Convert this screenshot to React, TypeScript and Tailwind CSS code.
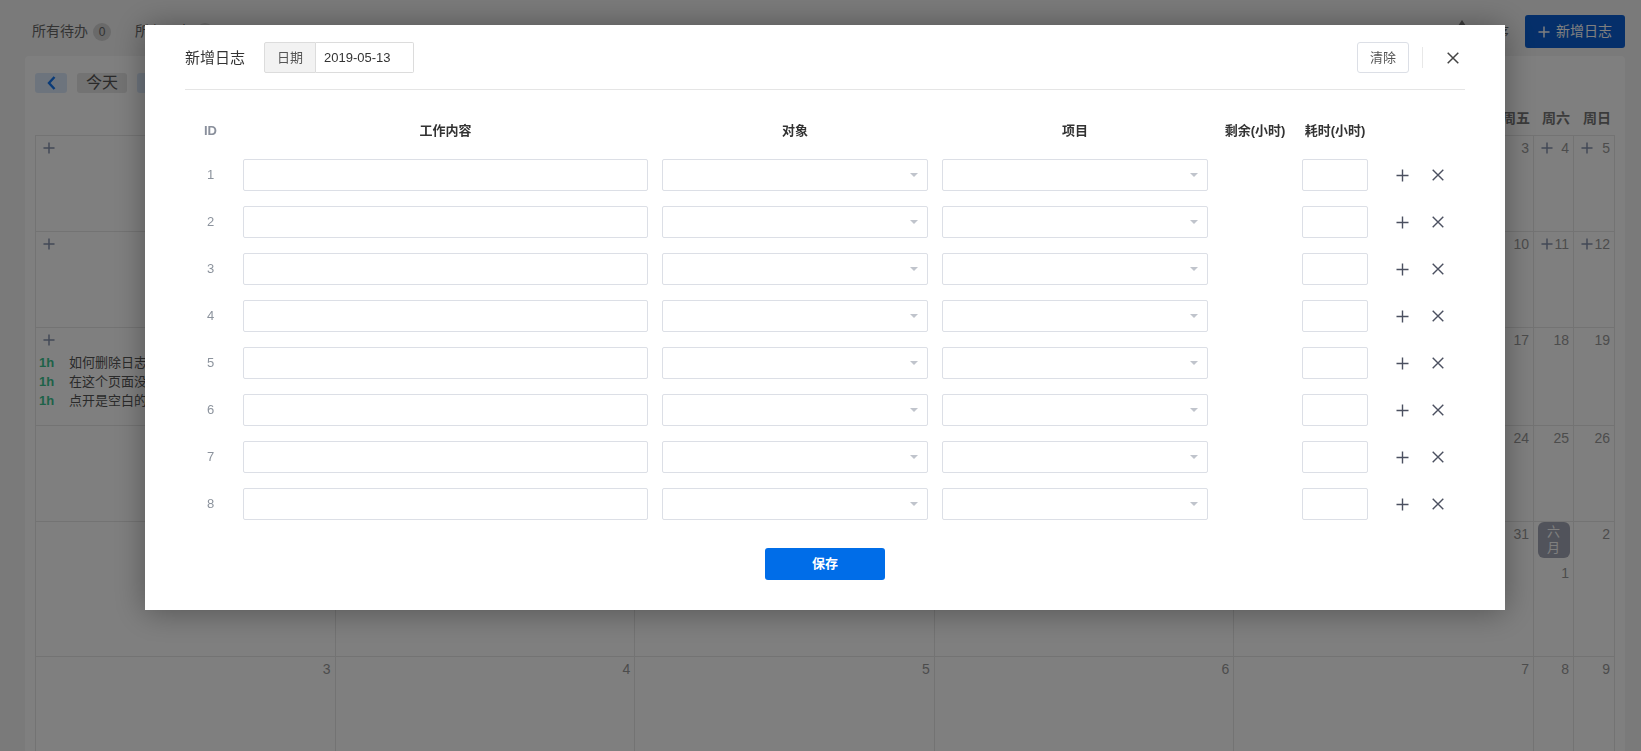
import React from 'react';

const weekNames = ['周一', '周二', '周三', '周四', '周五', '周六', '周日'];

type Cell = { day: number; plus?: boolean; entries?: string[]; month?: string };

const weeks: Cell[][] = [
  [29, 30, 1, 2, 3, 4, 5].map((d) => ({ day: d, plus: true })),
  [6, 7, 8, 9, 10, 11, 12].map((d) => ({ day: d, plus: true })),
  [
    { day: 13, plus: true, entries: ['如何删除日志？', '在这个页面没有找到删除按钮', '点开是空白的，无法编辑'] },
    { day: 14 },
    { day: 15 },
    { day: 16 },
    { day: 17 },
    { day: 18 },
    { day: 19 },
  ],
  [20, 21, 22, 23, 24, 25, 26].map((d) => ({ day: d })),
  [{ day: 27 }, { day: 28 }, { day: 29 }, { day: 30 }, { day: 31 }, { day: 1, month: '六月' }, { day: 2 }],
  [3, 4, 5, 6, 7, 8, 9].map((d) => ({ day: d })),
];

const PlusIcon = ({ size = 13, color = '#4b5060', stroke = 1.4 }: { size?: number; color?: string; stroke?: number }) => (
  <svg width={size} height={size} viewBox="0 0 13 13" fill="none">
    <path d="M6.5 0.5V12.5M0.5 6.5H12.5" stroke={color} strokeWidth={stroke} />
  </svg>
);

const CloseIcon = ({ size = 12, color = '#4b5060', stroke = 1.4 }: { size?: number; color?: string; stroke?: number }) => (
  <svg width={size} height={size} viewBox="0 0 12 12" fill="none">
    <path d="M0.7 0.7L11.3 11.3M11.3 0.7L0.7 11.3" stroke={color} strokeWidth={stroke} />
  </svg>
);

function CalCell({ cell }: { cell: Cell }) {
  // month change: badge on top of the day number
  if (cell.month) {
    return (
      <div className="flex flex-col items-center border-r border-b border-[#e6e6e6] bg-white">
        <div className="flex h-[36px] w-[32px] flex-col items-center justify-center rounded-[6px] bg-[#a3a7b6] text-[13px] leading-[16px] text-white">
          <span>{cell.month[0]}</span>
          <span>{cell.month[1]}</span>
        </div>
        <div className="mt-[5px] h-5 w-full pr-[4px] text-right text-[14px] leading-5 text-[#999]">{cell.day}</div>
        <div className="h-[73px]" />
      </div>
    );
  }
  return (
    <div className="flex min-h-[96px] flex-col border-r border-b border-[#e6e6e6] bg-white pb-[15px]">
      <div className="mt-[2px] flex h-5 items-center justify-between pl-[7px] pr-[4px]">
        {cell.plus ? <PlusIcon size={12} color="#8592ad" stroke={1.6} /> : <span />}
        <span className="text-[14px] leading-5 text-[#999]">{cell.day}</span>
      </div>
      {cell.entries && (
        <div className="mt-[3px] flex flex-col">
          {cell.entries.map((e) => (
            <div key={e} className="flex h-[19px] items-center whitespace-nowrap pl-[3px] text-[13px]">
              <span className="w-[30px] font-bold text-[#3cc592]">1h</span>
              <span className="text-[#555]">{e}</span>
            </div>
          ))}
        </div>
      )}
    </div>
  );
}

function SelectBox() {
  return (
    <div className="relative flex h-[32px] items-center justify-end rounded-[2px] border border-[#dcdfe6] bg-white pr-[9px]">
      <span className="h-0 w-0 border-x-[4px] border-t-[4px] border-x-transparent border-t-[#c0c4cc]" />
    </div>
  );
}

const cols = 'grid grid-cols-[51px_419px_280px_280px_80px_80px_90px]';

export default function App() {
  const rows = [1, 2, 3, 4, 5, 6, 7, 8];

  return (
    <div className="relative h-[751px] w-full overflow-hidden bg-[#f4f4f4] font-['Liberation_Sans','Noto_Sans_CJK_SC',sans-serif]">
      {/* page behind the dialog */}
      <div className="flex h-[56px] items-start pl-[32px] pr-[16px] pt-[15px]">
        <div className="flex h-[33px] items-center gap-[24px] text-[14px] text-[#666]">
          <div className="flex items-center gap-[5px]">
            <span>所有待办</span>
            <span className="flex h-[18px] w-[18px] items-center justify-center rounded-full bg-[#d4d4d4] text-[12px] text-[#666]">0</span>
          </div>
          <div className="flex items-center gap-[5px]">
            <span>所有日志</span>
            <span className="flex h-[18px] w-[18px] items-center justify-center rounded-full bg-[#d4d4d4] text-[12px] text-[#666]">3</span>
          </div>
        </div>
        <div className="ml-auto flex items-start gap-[16px]">
          <div className="mt-[5px] flex items-start gap-[14px] text-[14px] text-[#666]">
            <svg width="10" height="18" viewBox="0 0 10 18" fill="#777">
              <path d="M5 0L9 6H1Z" />
              <path d="M5 18L9 12H1Z" />
            </svg>
            <span className="mt-[2px]">排序</span>
          </div>
          <button className="flex h-[33px] w-[100px] items-center justify-center gap-[6px] rounded-[3px] bg-[#0a5fd4] text-[14px] text-white">
            <PlusIcon size={12} color="#ffffff" stroke={1.6} />
            新增日志
          </button>
        </div>
      </div>

      <div className="ml-[25px] mr-[16px] rounded-[4px] bg-white px-[10px] pt-[17px]">
        <div className="flex h-5 items-center gap-[10px]">
          <button className="flex h-5 w-[32px] items-center justify-center rounded-[3px] bg-[#dbe9fb]">
            <svg width="9" height="14" viewBox="0 0 9 14" fill="none">
              <path d="M7.5 1L2 7L7.5 13" stroke="#1476f0" strokeWidth="2.4" />
            </svg>
          </button>
          <button className="flex h-5 w-[50px] items-center justify-center rounded-[3px] bg-[#e6e6e6] text-[16px] text-[#555]">今天</button>
          <button className="flex h-5 w-[32px] items-center justify-center rounded-[3px] bg-[#dbe9fb]">
            <svg width="9" height="14" viewBox="0 0 9 14" fill="none">
              <path d="M1.5 1L7 7L1.5 13" stroke="#1476f0" strokeWidth="2.4" />
            </svg>
          </button>
        </div>

        <div className="grid h-[42px] grid-cols-[repeat(5,minmax(0,1fr))_40px_41px] pt-[8px]">
          {weekNames.map((w) => (
            <div key={w} className="flex items-center justify-end pr-[4px] text-[14px] font-bold text-[#777]">
              {w}
            </div>
          ))}
        </div>

        <div className="grid grid-cols-[repeat(5,minmax(0,1fr))_40px_41px] border-t border-l border-[#e6e6e6]">
          {weeks.map((week, wi) => week.map((c, ci) => <CalCell key={`${wi}-${ci}`} cell={c} />))}
        </div>
      </div>

      {/* dialog */}
      <div className="fixed inset-0 bg-black/50">
        <div className="ml-[145px] mt-[25px] w-[1360px] bg-white px-[40px] pb-[30px] shadow-[0_2px_30px_rgba(0,0,0,0.35)]">
          <div className="flex items-center border-b border-[#e5e5e5] pt-[17px] pb-[16px]">
            <div className="mr-[19px] text-[15px] leading-[20px] text-[#333]">新增日志</div>
            <div className="flex h-[31px] text-[13px]">
              <div className="flex w-[52px] items-center justify-center rounded-l-[2px] border border-[#dcdcdc] bg-[#f2f2f2] text-[#555]">日期</div>
              <div className="flex w-[98px] items-center rounded-r-[2px] border border-l-0 border-[#dcdcdc] pl-[8px] text-[#333]">2019-05-13</div>
            </div>
            <div className="ml-auto flex items-center">
              <button className="h-[31px] w-[52px] rounded-[3px] border border-[#dcdfe6] text-[13px] text-[#555]">清除</button>
              <div className="ml-[13px] h-[21px] w-px bg-[#e8e8e8]" />
              <button className="ml-[24px] mr-[6px] flex items-center">
                <CloseIcon size={12} color="#444" stroke={1.5} />
              </button>
            </div>
          </div>

          <div className={`${cols} mt-[32px] h-[18px] items-center text-[13px] font-bold leading-[18px] text-[#333]`}>
            <div className="text-center text-[#8a909c]">ID</div>
            <div className="text-center">工作内容</div>
            <div className="text-center">对象</div>
            <div className="text-center">项目</div>
            <div className="text-center">剩余(小时)</div>
            <div className="text-center">耗时(小时)</div>
            <div />
          </div>

          <div className="mt-[19px] flex flex-col gap-[15px]">
            {rows.map((r) => (
              <div key={r} className={`${cols} h-[32px] items-center`}>
                <div className="text-center text-[13px] text-[#8c939d]">{r}</div>
                <div className="px-[7px]">
                  <input className="h-[32px] w-full rounded-[2px] border border-[#dcdfe6] px-[8px] text-[13px] outline-none" />
                </div>
                <div className="px-[7px]">
                  <SelectBox />
                </div>
                <div className="px-[7px]">
                  <SelectBox />
                </div>
                <div />
                <div className="px-[7px]">
                  <input className="h-[32px] w-full rounded-[2px] border border-[#dcdfe6] px-[6px] text-[13px] outline-none" />
                </div>
                <div className="flex items-center gap-[23px] pl-[21px]">
                  <PlusIcon />
                  <CloseIcon />
                </div>
              </div>
            ))}
          </div>

          <div className="mt-[28px] flex justify-center">
            <button className="h-[32px] w-[120px] rounded-[3px] bg-[#006de8] text-[13px] font-bold text-white">保存</button>
          </div>
        </div>
      </div>
    </div>
  );
}
